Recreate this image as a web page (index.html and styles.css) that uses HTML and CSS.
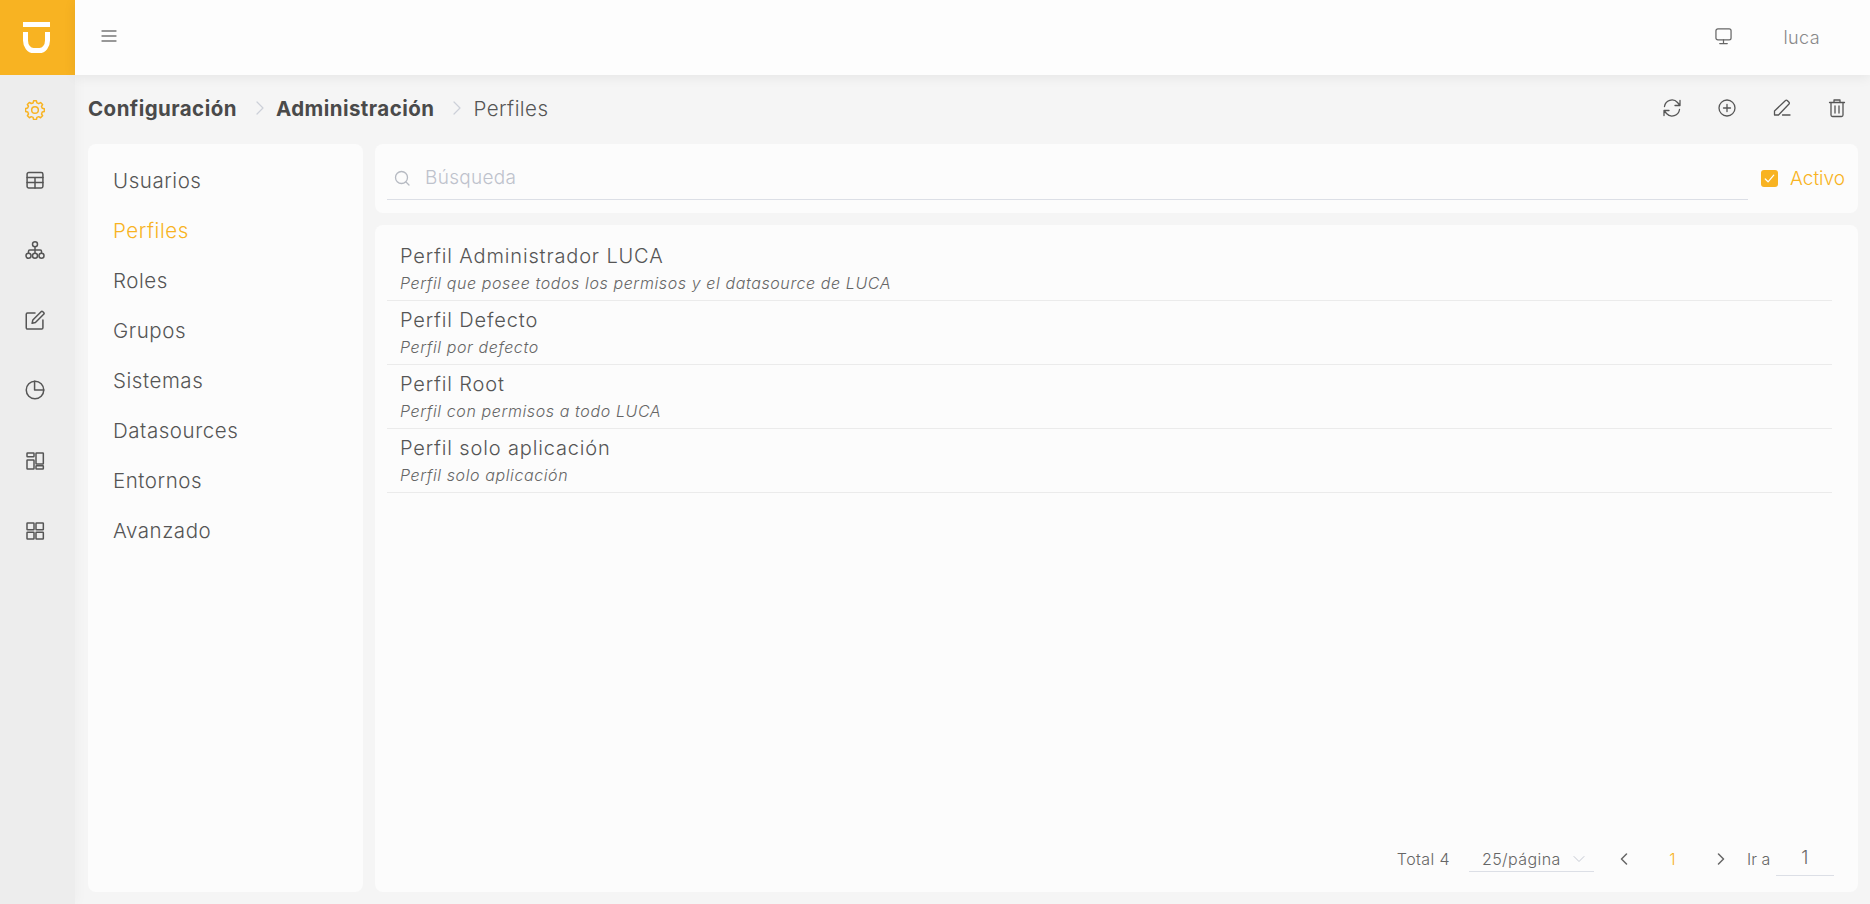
FILE: index.html
```html
<!DOCTYPE html>
<html lang="es">
<head>
<meta charset="utf-8">
<title>Perfiles</title>
<link rel="stylesheet" href="styles.css">
</head>
<body>
<div class="app">
  <aside class="rail">
    <div class="logo">
      <svg viewBox="0 0 27 31"><path d="M0 2.500h27"/><path d="M2.500 10v8.500a8 10 0 0 0 8 10h6a8 10 0 0 0 8-10V10"/></svg>
    </div>
    <nav class="rail-nav">
      <a class="rail-item is-active"><svg viewBox="0 0 24 24"><path d="M9.700 3.500 10.300 1h3.400l.6 2.500 2.200.9 2.200-1.300 2.400 2.400-1.300 2.200.9 2.200 2.500.6v3.400l-2.500.6-.9 2.200 1.300 2.200-2.400 2.400-2.200-1.300-2.200.9-.6 2.500h-3.400l-.6-2.500-2.200-.9-2.200 1.300-2.400-2.400 1.300-2.200-.9-2.200L.7 13.700v-3.400l2.500-.6.900-2.200-1.300-2.200 2.400-2.400 2.200 1.300z"/><circle cx="12" cy="12" r="4"/></svg></a>
      <a class="rail-item"><svg viewBox="0 0 24 24"><rect x="2.500" y="3" width="19" height="18.500" rx="2"/><path d="M2.500 9h19M2.500 15h19M12 9v12.500"/></svg></a>
      <a class="rail-item"><svg viewBox="0 0 24 24"><circle cx="12" cy="5" r="3"/><circle cx="4.200" cy="19" r="3"/><circle cx="12" cy="19" r="3"/><circle cx="19.800" cy="19" r="3"/><path d="M12 8v8M4.200 16v-2.500a1.500 1.500 0 0 1 1.500-1.500h12.600a1.500 1.500 0 0 1 1.500 1.500V16"/></svg></a>
      <a class="rail-item"><svg viewBox="0 0 24 24"><path d="M12 3.600H3a1.500 1.500 0 0 0-1.500 1.500v16.200A1.500 1.500 0 0 0 3 22.800h17a1.500 1.500 0 0 0 1.500-1.500V12"/><path d="m8.500 16 .9-4L19.300 2a1.500 1.500 0 0 1 2.100 0l1 1a1.500 1.500 0 0 1 0 2.100L12.500 15.100z"/></svg></a>
      <a class="rail-item"><svg viewBox="0 0 24 24"><circle cx="12" cy="12" r="10.500"/><path d="M11.500 1.500V12h11"/></svg></a>
      <a class="rail-item"><svg viewBox="0 0 24 24"><rect x="2.400" y="2.400" width="8.400" height="4.400" rx=".6"/><rect x="2.400" y="10.800" width="8.400" height="10.800" rx=".6"/><rect x="13.200" y="2.400" width="8.800" height="13.200" rx=".6"/><rect x="13.200" y="17.600" width="8.800" height="4" rx=".6"/></svg></a>
      <a class="rail-item"><svg viewBox="0 0 24 24"><rect x="2.400" y="2.400" width="8.400" height="8" rx=".6"/><rect x="13.200" y="2.400" width="8.800" height="8" rx=".6"/><rect x="2.400" y="13.600" width="8.400" height="8" rx=".6"/><rect x="13.200" y="13.600" width="8.800" height="8" rx=".6"/></svg></a>
    </nav>
  </aside>
  <div class="main">
    <header class="topbar">
      <button class="menu-btn" type="button"><svg viewBox="0 0 16 16"><path d="M1 3h14M1 8h14M1 13h14"/></svg></button>
      <div class="top-right">
        <svg class="monitor" viewBox="0 0 18 18"><rect x="1" y="1" width="16" height="11.500" rx="2"/><path d="M9 12.500v3.500M5 16.500h8"/></svg>
        <span class="user">luca</span>
      </div>
    </header>
    <div class="crumbbar">
      <div class="crumbs">
        <b>Configuración</b>
        <svg class="sep" viewBox="0 0 8 14"><path d="m1 1 6 6-6 6"/></svg>
        <b>Administración</b>
        <svg class="sep" viewBox="0 0 8 14"><path d="m1 1 6 6-6 6"/></svg>
        <span>Perfiles</span>
      </div>
      <div class="actions">
        <svg viewBox="0 0 20 20"><path d="M2.500 8.500A7.500 7.500 0 0 1 15.500 4.500L18 7.500M18 2.500v5h-5M17.500 11.500A7.500 7.500 0 0 1 4.500 15.500L2 12.500M2 17.500v-5h5"/></svg>
        <svg viewBox="0 0 20 20"><circle cx="10" cy="10" r="8"/><path d="M10 6.500v7M6.500 10h7"/></svg>
        <svg viewBox="0 0 20 20"><path d="M2.500 17v-4L13.500 2.500a1.200 1.200 0 0 1 1.700 0l1.800 1.800a1.200 1.200 0 0 1 0 1.700L6.500 17zM10.500 17H18"/></svg>
        <svg viewBox="0 0 20 20"><path d="M2.500 4.500h15M7 4.500V2h6v2.500M4 4.500V17a1.500 1.500 0 0 0 1.500 1.500h9A1.500 1.500 0 0 0 16 17V4.500M8 8v7M12 8v7"/></svg>
      </div>
    </div>
    <div class="content">
      <nav class="side card">
        <a>Usuarios</a>
        <a class="is-active">Perfiles</a>
        <a>Roles</a>
        <a>Grupos</a>
        <a>Sistemas</a>
        <a>Datasources</a>
        <a>Entornos</a>
        <a>Avanzado</a>
      </nav>
      <div class="panel">
        <div class="searchbar card">
          <div class="search">
            <svg viewBox="0 0 16 16"><circle cx="7.500" cy="7.500" r="6"/><path d="m12 12 3 3"/></svg>
            <span>Búsqueda</span>
          </div>
          <label class="check"><i><svg viewBox="0 0 18 18"><path d="m4.500 9.500 3 3 6-7"/></svg></i>Activo</label>
        </div>
        <div class="list card">
          <ul class="rows">
            <li><h4>Perfil Administrador LUCA</h4><p>Perfil que posee todos los permisos y el datasource de LUCA</p></li>
            <li><h4>Perfil Defecto</h4><p>Perfil por defecto</p></li>
            <li><h4>Perfil Root</h4><p>Perfil con permisos a todo LUCA</p></li>
            <li><h4>Perfil solo aplicación</h4><p>Perfil solo aplicación</p></li>
          </ul>
          <div class="pager">
            <span class="total">Total 4</span>
            <span class="size">25/página<svg viewBox="0 0 12 8"><path d="m1 1.500 5 5 5-5"/></svg></span>
            <svg class="arrow" viewBox="0 0 8 12"><path d="M6.500 1 1.500 6l5 5"/></svg>
            <span class="page">1</span>
            <svg class="arrow" viewBox="0 0 8 12"><path d="m1.500 1 5 5-5 5"/></svg>
            <span class="goto">Ir a</span>
            <span class="goto-input">1</span>
          </div>
        </div>
      </div>
    </div>
  </div>
</div>
</body>
</html>
```

FILE: styles.css
```css
* { box-sizing: border-box; }
html, body { margin: 0; height: 100%; }
body {
  font-family: Inter, "Open Sans", "Liberation Sans", sans-serif;
  font-weight: 300;
  color: #444;
  background: #f5f5f5;
  overflow: hidden;
}
svg { display: block; fill: none; stroke: currentColor; stroke-width: 1.6; stroke-linecap: round; stroke-linejoin: round; }
.app { display: flex; height: 904px; }
.rail { position: relative; z-index: 1; width: 75px; flex: none; background: #ededed; display: flex; flex-direction: column; box-shadow: 2px 0 12px rgba(0,0,0,.03); }
.logo { height: 75px; background: #f8b322; display: flex; align-items: flex-start; padding: 22px 0 0 23px; }
.logo svg { stroke: #fff; stroke-linecap: butt; stroke-width: 5; width: 27px; height: 31px; }
.rail-nav { display: flex; flex-direction: column; }
.rail-item { height: 70.100px; display: flex; align-items: center; justify-content: center; color: #555; padding-right: 5px; }
.rail-item svg { width: 20px; height: 20px; stroke-width: 1.800; }
.rail-item.is-active { color: #f8b322; }
.main { flex: 1; min-width: 0; display: flex; flex-direction: column; }
.topbar {
  position: relative; z-index: 2;
  height: 75px; flex: none; background: #fdfdfd; display: flex; align-items: center; justify-content: space-between;
  padding: 0 50px 0 26px; box-shadow: 0 2px 12px rgba(0,0,0,.07);
}
.menu-btn { padding: 0; border: 0; background: none; color: #777; width: 16px; height: 16px; margin-top: -3px; }
.menu-btn svg { width: 16px; height: 16px; stroke-width: 1.300; }
.top-right { display: flex; align-items: center; gap: 51px; color: #888; }
.monitor { width: 17px; height: 17px; stroke-width: 1.300; color: #666; margin-top: -3px; }
.user { font-size: 18px; letter-spacing: .4px; }
.crumbbar { height: 69px; flex: none; display: flex; align-items: center; justify-content: space-between; padding: 0 23px 3px 13px; }
.crumbs { display: flex; align-items: center; font-size: 20.500px; letter-spacing: .45px; color: #555; }
.crumbs b { font-weight: 700; color: #4a4a4a; }
.sep { width: 8px; height: 14px; margin: 0 12px 0 19px; color: #ccd0d8; stroke-width: 1.200; }
.actions { display: flex; gap: 35px; color: #555; }
.actions svg { width: 20px; height: 20px; stroke-width: 1.300; }
.content { flex: 1; min-height: 0; display: flex; gap: 12px; padding: 0 12px 12px 13px; }
.card { background: #fcfcfc; border-radius: 8px; }
.side { width: 275px; flex: none; padding: 11px 0 0 25px; display: flex; flex-direction: column; }
.side a { height: 50px; display: flex; align-items: center; font-size: 20.500px; letter-spacing: .55px; color: #555; }
.side a.is-active { color: #f8b322; }
.panel { flex: 1; min-width: 0; display: flex; flex-direction: column; gap: 12px; }
.searchbar { height: 69px; flex: none; display: flex; align-items: flex-start; padding: 0 13px 0 12px; gap: 13px; }
.search { flex: 1; height: 56px; border-bottom: 1px solid #dcdfe6; display: flex; align-items: center; gap: 15px; padding: 12px 7px 0; color: #bec2cc; font-size: 19px; letter-spacing: .3px; }
.search svg { width: 16px; height: 16px; stroke-width: 1.300; color: #b6bac2; }
.check { display: flex; align-items: center; gap: 12px; font-size: 19px; color: #f8b322; height: 69px; }
.check i { width: 17px; height: 17px; background: #f8b322; border-radius: 3px; color: #fff; }
.check svg { width: 17px; height: 17px; stroke-width: 1.300; }
.list { flex: 1; min-height: 0; display: flex; flex-direction: column; justify-content: space-between; padding: 12px 26px 16px 12px; }
.rows { list-style: none; margin: 0; padding: 0; }
.rows li { height: 64px; border-bottom: 1px solid #ebebeb; padding: 4px 13px 0; }
.rows h4 { margin: 0; font-weight: 300; font-size: 20px; line-height: 30px; letter-spacing: .85px; color: #555; }
.rows p { margin: 2px 0 0; font-size: 16px; line-height: 20px; font-style: italic; letter-spacing: .6px; color: #666; }
.pager { display: flex; align-items: center; justify-content: flex-end; font-size: 16px; letter-spacing: .4px; color: #666; margin-right: -2px; }
.total { margin-right: 19px; }
.size { width: 125px; height: 26px; border-bottom: 1px solid #dcdfe6; display: flex; align-items: center; justify-content: space-between; padding: 0 9px 0 13px; margin-right: 26px; }
.size svg { width: 12px; height: 8px; stroke-width: 1; color: #c4c8d2; }
.arrow { width: 8px; height: 12px; stroke-width: 1.500; color: #666; }
.page { width: 89px; text-align: center; color: #f8b322; }
.goto { width: 23px; white-space: nowrap; letter-spacing: 0; margin: 0 6px 0 22px; }
.goto-input { width: 58px; height: 34px; border-bottom: 1px solid #dcdfe6; text-align: center; font-size: 18px; line-height: 32px; }
```
